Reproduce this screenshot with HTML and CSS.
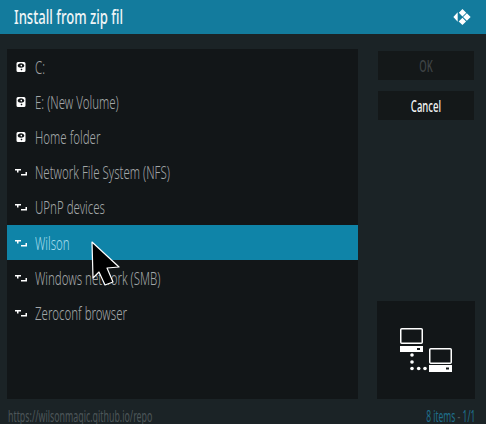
FILE: index.html
```html
<!DOCTYPE html>
<html lang="en">
<head>
<meta charset="UTF-8" />
<title>Install from zip file</title>
<link rel="stylesheet" href="styles.css">
</head>
<body>

<svg class="defs" width="0" height="0">
  <symbol id="drive" viewBox="0 0 9 10">
    <path fill="#fff" fill-rule="evenodd" d="M1.500 0h6A1.500 1.500 0 0 1 9 1.500v7A1.500 1.500 0 0 1 7.500 10h-6A1.500 1.500 0 0 1 0 8.500v-7A1.500 1.500 0 0 1 1.500 0zM4.500 1.200C2.800 1.200 1.200 2.200 1.200 3.500S2.800 5.800 4.500 5.800s3.300-1 3.300-2.300S6.200 1.200 4.500 1.200zM4.500 2.800a.8.8 0 1 1 0 1.500.8.8 0 0 1 0-1.500zM5 6.500L4 7.500l1 1 1-1z"/>
  </symbol>
  <symbol id="network" viewBox="0 0 12 7">
    <path fill="#fff" d="M0 0.500h6V2H3.500V4H2V2H0zM6 5.500h4.500V3.500H12V7H6z"/>
  </symbol>
</svg>

<header class="top-bar">
  <h1 class="title"><span class="squeeze">Install from zip file</span></h1>
  <svg class="kodi-logo" viewBox="0 0 20 20" width="18" height="18">
    <path fill="#fff" d="M5.200 4.800v10.400L.4 10zM10.500 1l4.200 4.200-4.200 4.200-4-4.200zM15.400 5.900L19.600 10l-4.200 4.200-4.200-4.200zM10.500 10.800l4 4.100-4 4.100-4.200-4.100z"/>
  </svg>
</header>

<main class="dialog">
  <ul class="file-list">
    <li class="row"><svg class="row-icon"><use href="#drive"/></svg><span class="squeeze">C:</span></li>
    <li class="row"><svg class="row-icon"><use href="#drive"/></svg><span class="squeeze">E: (New Volume)</span></li>
    <li class="row"><svg class="row-icon"><use href="#drive"/></svg><span class="squeeze">Home folder</span></li>
    <li class="row"><svg class="row-icon"><use href="#network"/></svg><span class="squeeze">Network File System (NFS)</span></li>
    <li class="row"><svg class="row-icon"><use href="#network"/></svg><span class="squeeze">UPnP devices</span></li>
    <li class="row selected"><svg class="row-icon"><use href="#network"/></svg><span class="squeeze">Wilson</span></li>
    <li class="row"><svg class="row-icon"><use href="#network"/></svg><span class="squeeze">Windows network (SMB)</span></li>
    <li class="row"><svg class="row-icon"><use href="#network"/></svg><span class="squeeze">Zeroconf browser</span></li>
  </ul>

  <aside class="side">
    <div class="btn disabled"><span class="squeeze">OK</span></div>
    <div class="btn"><span class="squeeze">Cancel</span></div>
    <div class="preview">
      <svg viewBox="0 0 52 44" width="52" height="44">
        <rect x="0.750" y="0.750" width="21.500" height="14.500" rx="1" fill="none" stroke="#fff" stroke-width="1.500"/>
        <path fill="#fff" d="M0 18h23v6H0z"/>
        <rect x="17" y="20" width="3" height="2" fill="#121618"/>
        <rect x="29.750" y="20.750" width="21.500" height="14.500" rx="1" fill="none" stroke="#fff" stroke-width="1.500"/>
        <path fill="#fff" d="M29 37h23v7H29z"/>
        <rect x="46" y="39.500" width="3" height="2" fill="#121618"/>
        <g fill="#fff">
          <circle cx="12" cy="27" r="1.800"/>
          <circle cx="12" cy="34" r="1.800"/>
          <circle cx="12" cy="40.500" r="1.800"/>
          <circle cx="18.700" cy="40.500" r="1.800"/>
          <circle cx="25" cy="40.500" r="1.800"/>
        </g>
      </svg>
    </div>
  </aside>
</main>

<footer class="status">
  <span class="squeeze path">https://wilsonmagic.github.io/repo</span>
  <span class="count"><b>8 items</b> - <i>1/1</i></span>
</footer>

<svg class="cursor" viewBox="0 0 30 46" width="30" height="46">
  <path fill="#000" stroke="#fff" stroke-width="1.200" stroke-linejoin="round" d="M1 1L28 26L16 27L22 41L14 44L8 31L2 37z"/>
</svg>

</body>
</html>
```

FILE: styles.css
```css
* {
  box-sizing: border-box;
}
html, body {
  height: 100%;
}
body {
  margin: 0;
  background: #1b2326;
  color: #a3a7a8;
  font-family: "Noto Sans", sans-serif;
  overflow: hidden;
  position: relative;
}
.defs {
  display: block;
  height: 0;
}
.squeeze {
  display: inline-block;
  transform: scaleX(0.638);
  transform-origin: left center;
  white-space: nowrap;
}
.top-bar {
  height: 34px;
  background: #137b9d;
  display: flex;
  align-items: center;
  justify-content: space-between;
  padding: 0 15px 0 14px;
}
.title {
  margin: 0;
  width: 109px;
  overflow: hidden;
  font-size: 19px;
  font-weight: 500;
  color: #eef4f6;
  white-space: nowrap;
}
.title .squeeze {
  transform: scaleX(0.69);
}
.kodi-logo {
  display: block;
}
.dialog {
  display: flex;
  justify-content: space-between;
  padding: 15px 11px 0 7px;
}
.file-list {
  list-style: none;
  margin: 0;
  padding: 0;
  width: 351px;
  height: 350px;
  background: #121618;
}
.row {
  height: 35.2px;
  display: flex;
  align-items: center;
  padding-left: 8px;
  font-size: 18px;
  font-weight: 300;
}
.row.selected {
  background: #0f84a8;
  color: #a5dcec;
}
.row-icon {
  width: 12px;
  height: 10px;
  margin-right: 8px;
  flex: none;
}
.side {
  width: 98px;
  height: 350px;
  display: flex;
  flex-direction: column;
  gap: 11px;
}
.btn {
  margin: 2px 1px 0;
  height: 29px;
  background: #141819;
  color: #f2f4f4;
  font-size: 17px;
  font-weight: 500;
  display: flex;
  align-items: center;
  justify-content: center;
}
.btn + .btn {
  margin-top: 0;
}
.btn .squeeze {
  transform: scaleX(0.56);
  transform-origin: center;
}
.btn.disabled {
  color: #3f4446;
}
.preview {
  margin-top: auto;
  height: 98px;
  background: #121618;
  display: flex;
  align-items: center;
  justify-content: center;
}
.status {
  display: flex;
  justify-content: space-between;
  padding: 0 11px 0 8px;
  margin-top: 8px;
  font-size: 17px;
  line-height: 18px;
  color: #4d5659;
}
.status .squeeze {
  transform: scaleX(0.52);
}
.count {
  display: inline-block;
  transform: scaleX(0.5);
  transform-origin: right center;
  white-space: nowrap;
}
.count b {
  font-weight: 400;
  color: #1f6f8c;
}
.count i {
  font-style: normal;
  color: #1f6f8c;
}
.cursor {
  position: absolute;
  left: 91px;
  top: 241px;
}
```
